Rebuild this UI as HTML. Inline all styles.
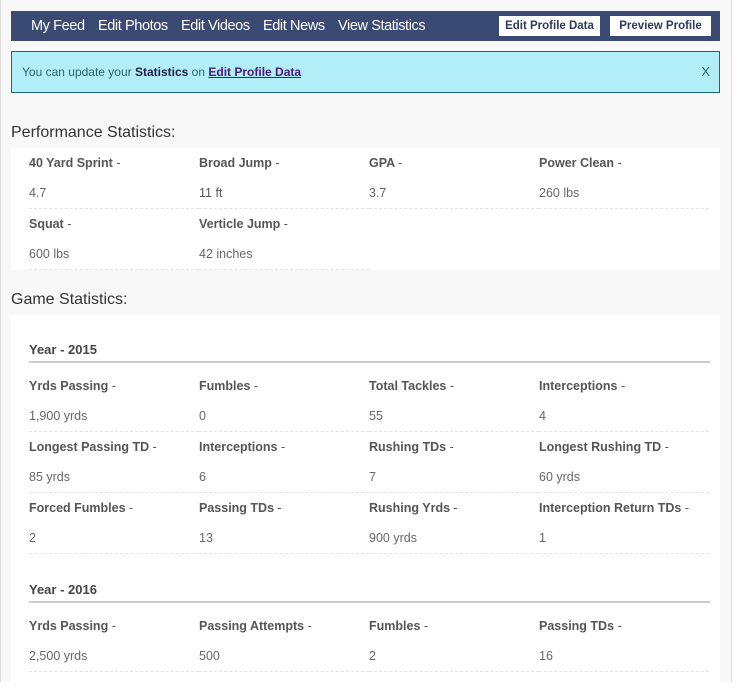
<!DOCTYPE html>
<html><head><style>
*{box-sizing:border-box;margin:0;padding:0}
body{width:743px;height:682px;overflow:hidden;background:#fff;font-family:"Liberation Sans",Arial,sans-serif}
.page{position:absolute;left:0;top:0;width:732px;height:682px;background:#f8f8f8;border-right:1px solid #ddd;border-left:1px solid #ddd}
.nav{position:absolute;left:10px;top:11px;width:709px;height:30px;background:#3b4a72}
.nav a{position:absolute;top:0;line-height:30px;color:#fff;font-size:14.5px;letter-spacing:-0.4px;text-decoration:none}
.btn{position:absolute;top:5px;height:20px;width:101px;background:#fff;color:#2d3a5e;font-size:11.5px;font-weight:bold;text-align:center;line-height:20px}
.alert{position:absolute;left:10px;top:51px;width:709px;height:42px;background:#b2eef8;border:1px solid #1a6a76;font-size:12px;color:#2b6270;line-height:40px;padding-left:10px}
.alert b{color:#224}
.alert a{color:#4b1a7a;font-weight:bold;text-decoration:underline}
.alert .x{position:absolute;right:9px;top:0;font-size:13px}
h2{position:absolute;left:10px;font-size:16px;font-weight:normal;color:#333}
.panel{position:absolute;left:10px;width:709px;background:#fff;padding-left:18px}
.row{display:flex;width:681px}
.cell{width:170px;height:61px;padding-top:6px;border-bottom:1px dashed #e4e4e4;font-size:12.5px}
.l{line-height:18px;font-weight:bold;color:#555}
.l span{font-weight:normal}
.v{line-height:18px;margin-top:12px;color:#666}
.yr{width:681px;font-size:13px;font-weight:bold;color:#444;line-height:18px;border-bottom:2px solid #ccc;padding-bottom:2px;margin-bottom:8px}
</style></head><body>
<div class="page">
<div class="nav">
<a style="left:20px">My Feed</a><a style="left:87px">Edit Photos</a><a style="left:170px">Edit Videos</a><a style="left:252px">Edit News</a><a style="left:327px">View Statistics</a>
<div class="btn" style="left:488px">Edit Profile Data</div><div class="btn" style="left:599px">Preview Profile</div>
</div>
<div class="alert">You can update your <b>Statistics</b> on <a>Edit Profile Data</a><span class="x">X</span></div>
<h2 style="top:124px">Performance Statistics:</h2>
<div class="panel" style="top:148px;height:122px">
<div class="row">
<div class="cell"><div class="l">40 Yard Sprint <span>-</span></div><div class="v">4.7</div></div>
<div class="cell"><div class="l">Broad Jump <span>-</span></div><div class="v" style="color:#555">11 ft</div></div>
<div class="cell"><div class="l">GPA <span>-</span></div><div class="v">3.7</div></div>
<div class="cell"><div class="l">Power Clean <span>-</span></div><div class="v">260 lbs</div></div>
</div>
<div class="row">
<div class="cell"><div class="l">Squat <span>-</span></div><div class="v">600 lbs</div></div>
<div class="cell"><div class="l">Verticle Jump <span>-</span></div><div class="v">42 inches</div></div>
</div>
</div>
<h2 style="top:291px">Game Statistics:</h2>
<div class="panel" style="top:315px;height:380px;padding-top:26px">
<div class="yr">Year - 2015</div>
<div class="row">
<div class="cell"><div class="l">Yrds Passing <span>-</span></div><div class="v">1,900 yrds</div></div>
<div class="cell"><div class="l">Fumbles <span>-</span></div><div class="v">0</div></div>
<div class="cell"><div class="l">Total Tackles <span>-</span></div><div class="v">55</div></div>
<div class="cell"><div class="l">Interceptions <span>-</span></div><div class="v">4</div></div>
</div>
<div class="row">
<div class="cell"><div class="l">Longest Passing TD <span>-</span></div><div class="v">85 yrds</div></div>
<div class="cell"><div class="l">Interceptions <span>-</span></div><div class="v">6</div></div>
<div class="cell"><div class="l">Rushing TDs <span>-</span></div><div class="v">7</div></div>
<div class="cell"><div class="l">Longest Rushing TD <span>-</span></div><div class="v">60 yrds</div></div>
</div>
<div class="row">
<div class="cell"><div class="l">Forced Fumbles <span>-</span></div><div class="v">2</div></div>
<div class="cell"><div class="l">Passing TDs <span>-</span></div><div class="v">13</div></div>
<div class="cell"><div class="l">Rushing Yrds <span>-</span></div><div class="v">900 yrds</div></div>
<div class="cell"><div class="l">Interception Return TDs <span>-</span></div><div class="v">1</div></div>
</div>
<div class="yr" style="margin-top:27px">Year - 2016</div>
<div class="row">
<div class="cell"><div class="l">Yrds Passing <span>-</span></div><div class="v">2,500 yrds</div></div>
<div class="cell"><div class="l">Passing Attempts <span>-</span></div><div class="v">500</div></div>
<div class="cell"><div class="l">Fumbles <span>-</span></div><div class="v">2</div></div>
<div class="cell"><div class="l">Passing TDs <span>-</span></div><div class="v">16</div></div>
</div>
</div>
</div>
</body></html>
